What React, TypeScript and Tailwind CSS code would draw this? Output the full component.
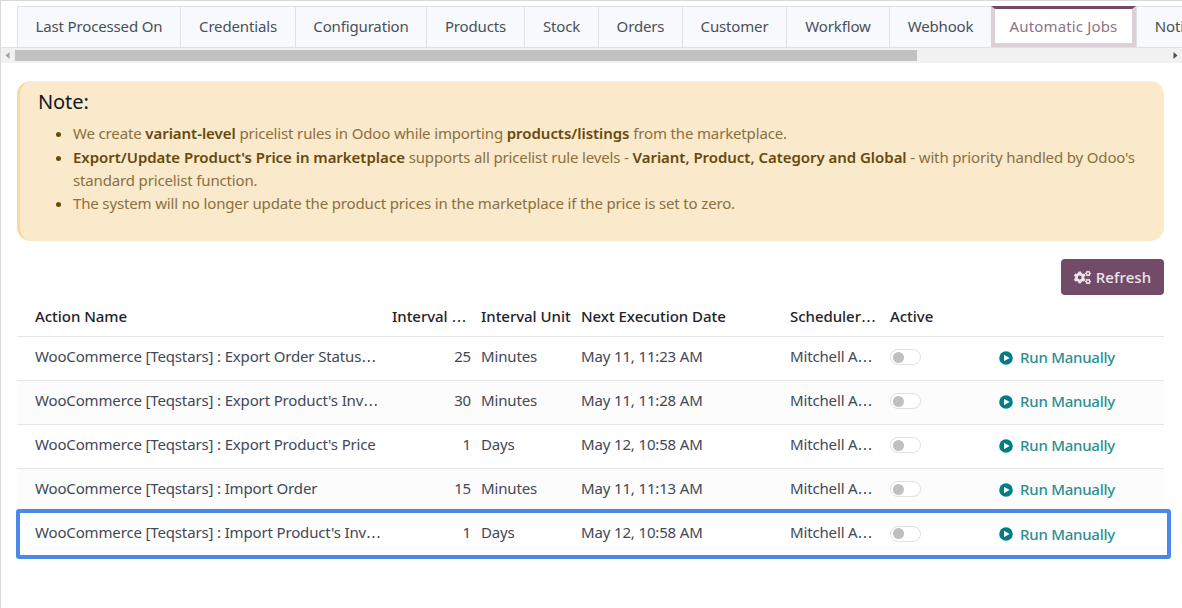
import React, { useState } from 'react'
import { FaCogs } from 'react-icons/fa'
import clsx from 'clsx'

const tabs = [
  { label: 'Last Processed On', width: 'w-[163px]' },
  { label: 'Credentials', width: 'w-[115px]' },
  { label: 'Configuration', width: 'w-[131px]' },
  { label: 'Products', width: 'w-[98px]' },
  { label: 'Stock', width: 'w-[74px]' },
  { label: 'Orders', width: 'w-[84px]' },
  { label: 'Customer', width: 'w-[104px]' },
  { label: 'Workflow', width: 'w-[103px]' },
  { label: 'Webhook', width: 'w-[102px]' },
  { label: 'Automatic Jobs', width: 'w-[145px]' },
  { label: 'Notifications', width: 'w-[124px]' },
]

interface Job {
  name: string
  interval: number
  unit: string
  next: string
  user: string
}

const jobs: Job[] = [
  { name: 'WooCommerce [Teqstars] : Export Order Status…', interval: 25, unit: 'Minutes', next: 'May 11, 11:23 AM', user: 'Mitchell A…' },
  { name: "WooCommerce [Teqstars] : Export Product's Inv…", interval: 30, unit: 'Minutes', next: 'May 11, 11:28 AM', user: 'Mitchell A…' },
  { name: "WooCommerce [Teqstars] : Export Product's Price", interval: 1, unit: 'Days', next: 'May 12, 10:58 AM', user: 'Mitchell A…' },
  { name: 'WooCommerce [Teqstars] : Import Order', interval: 15, unit: 'Minutes', next: 'May 11, 11:13 AM', user: 'Mitchell A…' },
  { name: "WooCommerce [Teqstars] : Import Product's Inv…", interval: 1, unit: 'Days', next: 'May 12, 10:58 AM', user: 'Mitchell A…' },
]

const columns = 'grid grid-cols-[357px_89px_100px_209px_100px_109px_1fr] items-center pl-[18px] whitespace-nowrap'

// Shortened labels end in a wide ellipsis
const Label = ({ text }: { text: string }) => {
  if (!text.endsWith('…')) return <span>{text}</span>

  return (
    <span>
      {text.slice(0, -1)}
      <span className="font-['DejaVu_Sans',sans-serif] font-normal leading-none">…</span>
    </span>
  )
}

const PlayIcon = () => (
  <svg viewBox="0 0 14 14" className="w-[14px] h-[14px] shrink-0">
    <circle cx="7" cy="7" r="6.8" fill="#017e84" />
    <path d="M5 3.7v6.6L10.6 7z" fill="#fff" />
  </svg>
)

const Toggle = () => {
  const [on, setOn] = useState<boolean>(false)

  return (
    <button
      onClick={() => setOn(!on)}
      className={clsx(
        'flex items-center w-[31px] h-4 mt-[2px] px-[2px] rounded-full border border-[#e0e0e0] bg-white',
        on && 'justify-end'
      )}
    >
      <span className="w-[11px] h-[11px] rounded-full bg-[#bfbfbf]" />
    </button>
  )
}

const App = () => {
  const [active, setActive] = useState<string>('Automatic Jobs')

  return (
    <div className="h-[608px] w-full overflow-hidden border-l border-t border-[#d9d9d9] bg-white font-['Noto_Sans',sans-serif] text-[15px] tracking-[-0.15px] text-[#414856]">
      {/* Tabs */}
      <div className="flex h-[47px] pt-[5px] pl-4 overflow-hidden border-b border-[#dee2e6]">
        {tabs.map((tab) => {
          const isActive = tab.label === active
          return (
            <button
              key={tab.label}
              onClick={() => setActive(tab.label)}
              className={clsx(
                'shrink-0 flex items-center justify-center whitespace-nowrap',
                tab.width,
                isActive
                  ? 'border-4 border-t-[3px] border-[#dccfd8] border-t-[#714b67] bg-white text-[#8f7188] tracking-[0.15px]'
                  : 'border-t border-l border-[#dee2e6] bg-[#f8f9fc] pb-[2px] text-[#495057]'
              )}
            >
              {tab.label}
            </button>
          )
        })}
      </div>

      {/* Horizontal scrollbar */}
      <div className="flex items-center h-[15px] bg-[#f1f1f1]">
        <svg viewBox="0 0 14 15" className="w-[14px] h-[15px]">
          <path d="M8.5 4v7L4.5 7.5z" fill="#a3a3a3" />
        </svg>
        <div className="w-[902px] h-[11px] bg-[#c1c1c1]" />
        <svg viewBox="0 0 14 15" className="w-[14px] h-[15px] ml-auto">
          <path d="M5.5 4v7l4-3.5z" fill="#505050" />
        </svg>
      </div>

      <div className="pl-4 pr-[18px] pt-[18px]">
        {/* Note */}
        <div className="h-[160px] rounded-[14px] border-l-[3px] border-[#f8d99a] bg-[#fbe9cc] pl-[18px] pt-[7px] text-[#89703d]">
          <h4 className="text-[20px] leading-[28px] tracking-[-0.1px] text-[#111827]">Note:</h4>
          <ul className="mt-[6px] pl-[35px] list-disc leading-[23px] marker:text-[#664d03] [&_b]:font-semibold [&_b]:tracking-[-0.04px] [&_b]:text-[#664a0d]">
            <li>
              We create <b>variant-level</b> pricelist rules in Odoo while importing <b>products/listings</b> from the
              marketplace.
            </li>
            <li className="pt-px">
              <b>Export/Update Product's Price in marketplace</b> supports all pricelist rule levels -{' '}
              <b>Variant, Product, Category and Global</b> - with priority handled by Odoo's
              <br />
              standard pricelist function.
            </li>
            <li>The system will no longer update the product prices in the marketplace if the price is set to zero.</li>
          </ul>
        </div>

        <div className="flex justify-end pt-[18px]">
          <button className="flex items-center justify-center gap-[5px] w-[103px] h-9 rounded-[4px] bg-[#714b67] text-[#eee6ec] font-medium tracking-[0.1px]">
            <FaCogs className="w-[17px] h-[17px]" />
            Refresh
          </button>
        </div>

        {/* Scheduled jobs */}
        <div>
          <div className={clsx(columns, 'h-[42px] pt-px border-b border-[#e3e5e8] font-medium tracking-[-0.04px] text-[#1f2329]')}>
            <Label text="Action Name" />
            <Label text="Interval …" />
            <Label text="Interval Unit" />
            <Label text="Next Execution Date" />
            <Label text="Scheduler…" />
            <Label text="Active" />
          </div>
          <div className="relative">
            {jobs.map((job, index) => (
              <div
                key={job.name}
                className={clsx(
                  columns,
                  'h-11 pb-[5px]',
                  index % 2 === 1 && 'bg-[#fcfcfc]',
                  index < jobs.length - 1 && 'border-b border-[#e3e5e8]'
                )}
              >
                <Label text={job.name} />
                <span className="pr-[10px] text-right">{job.interval}</span>
                <span>{job.unit}</span>
                <span>{job.next}</span>
                <Label text={job.user} />
                <Toggle />
                <button className="flex items-center gap-[7px] pt-[3px] font-medium tracking-[-0.25px] text-[#2b8f92]">
                  <PlayIcon />
                  Run Manually
                </button>
              </div>
            ))}
            {/* Highlight around the last job */}
            <div className="absolute -left-[1px] -right-[7px] -bottom-[2px] h-[50px] rounded-[3px] border-4 border-[#4a89e8] pointer-events-none" />
          </div>
        </div>
      </div>
    </div>
  )
}

export default App
